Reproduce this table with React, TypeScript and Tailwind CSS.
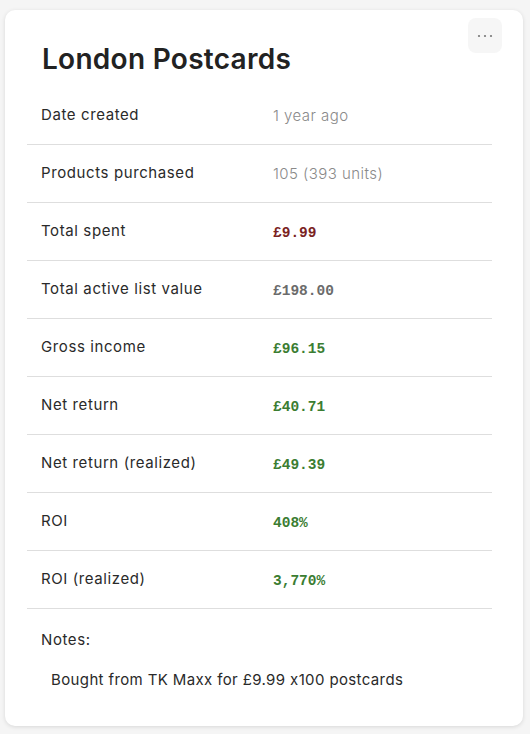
import React from "react";

type Row = { label: string; value: string; kind: "text" | "red" | "gray" | "green" };

const rows: Row[] = [
  { label: "Date created", value: "1 year ago", kind: "text" },
  { label: "Products purchased", value: "105 (393 units)", kind: "text" },
  { label: "Total spent", value: "£9.99", kind: "red" },
  { label: "Total active list value", value: "£198.00", kind: "gray" },
  { label: "Gross income", value: "£96.15", kind: "green" },
  { label: "Net return", value: "£40.71", kind: "green" },
  { label: "Net return (realized)", value: "£49.39", kind: "green" },
  { label: "ROI", value: "408%", kind: "green" },
  { label: "ROI (realized)", value: "3,770%", kind: "green" },
];

function Value({ row }: { row: Row }) {
  if (row.kind === "text") {
    return <span className="text-[15px] font-light text-[#8a8a8a] tracking-[0.03em]">{row.value}</span>;
  }
  const color =
    row.kind === "red" ? "text-[#7a2222]" : row.kind === "gray" ? "text-[#6b6b6b]" : "text-[#3b7d32]";
  return (
    <span className={`text-[14.5px] font-bold ${color} [font-family:'Liberation_Mono',monospace]`}>
      {row.value}
    </span>
  );
}

export default function App() {
  return (
    <div className="min-h-[734px] bg-[#f5f5f5] pt-[10px] pl-[5px] [font-family:Inter,'Noto_Sans',sans-serif]">
      <div className="relative w-[518px] rounded-[10px] bg-white pl-[22px] pr-[31px] pt-[33px] pb-[36px] shadow-[0_1px_4px_rgba(0,0,0,0.12)]">
        <button className="absolute right-[21px] top-[8px] flex h-[35px] w-[34px] items-center justify-center rounded-[8px] bg-[#f6f6f6]">
          <svg width="16" height="4" viewBox="0 0 16 4">
            <circle cx="2" cy="2" r="1.1" fill="#777" />
            <circle cx="8" cy="2" r="1.1" fill="#777" />
            <circle cx="14" cy="2" r="1.1" fill="#777" />
          </svg>
        </button>
        <h1 className="pl-[15px] text-[28px] leading-[32px] font-semibold text-[#222] tracking-[0.01em]">
          London Postcards
        </h1>
        <div className="mt-[12px]">
          {rows.map((r) => (
            <div
              key={r.label}
              className="grid h-[58px] grid-cols-[232px_1fr] items-center border-b border-[#dedede]"
            >
              <div className="pl-[14px] text-[15px] text-[#2a2a2a] tracking-[0.04em]">{r.label}</div>
              <div className="pl-[14px]">
                <Value row={r} />
              </div>
            </div>
          ))}
        </div>
        <div className="pl-[14px] pt-[21px] text-[15px] leading-[20px] text-[#2a2a2a] tracking-[0.04em]">
          Notes:
        </div>
        <div className="pl-[24px] pt-[20px] text-[15px] leading-[20px] text-[#2a2a2a] tracking-[0.025em]">
          Bought from TK Maxx for £9.99 x100 postcards
        </div>
      </div>
    </div>
  );
}
